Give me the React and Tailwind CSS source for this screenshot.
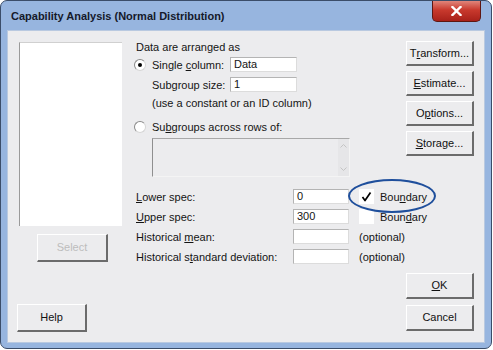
import React from 'react'

function U({ children }) {
  return <span className="underline underline-offset-[1px]">{children}</span>
}

function WinButton({ children, className = '', disabled = false }) {
  return (
    <button
      type="button"
      className={`flex shrink-0 items-center justify-center border-t border-l border-t-white border-l-white border-b-2 border-r-2 border-b-[#6b6b6b] border-r-[#6b6b6b] bg-[#ececee] text-[11px] leading-none ${
        disabled ? 'text-[#bdbdbd]' : 'text-[#111]'
      } ${className}`}
    >
      {children}
    </button>
  )
}

function Radio({ checked }) {
  return (
    <span className="flex h-[12px] w-[12px] shrink-0 items-center justify-center rounded-full border border-[#8a8a8a] border-b-[#d6d6d6] border-r-[#d6d6d6] bg-white">
      {checked && <span className="h-[4px] w-[4px] rounded-full bg-black" />}
    </span>
  )
}

function Field({ value = '', className = '' }) {
  return (
    <div
      className={`flex h-[15px] shrink-0 items-center border border-[#dcdcdc] border-t-[#b4b4b4] border-l-[#b4b4b4] bg-white pl-[3px] text-[11px] leading-none ${className}`}
    >
      {value}
    </div>
  )
}

export default function App() {
  return (
    <div className="h-[350px] w-[493px] bg-white font-['Liberation_Sans',Arial,sans-serif] text-[11px] text-[#141414]">
      <div className="flex h-[349px] w-[492px] flex-col rounded-[7px] border border-[#3b4d69] bg-[#97b5df]">
        {/* title bar */}
        <div className="flex h-[29px] items-start justify-between">
          <div className="pl-[10px] pt-[9px] text-[11px] font-bold leading-[13px] text-[#15192a]">
            Capability Analysis (Normal Distribution)
          </div>
          <div className="mr-[10px] flex h-[21px] w-[49px] items-center justify-center rounded-b-[5px] border border-t-0 border-[#5e1712] bg-[linear-gradient(180deg,#e0857a_0%,#c8392d_45%,#a8211a_100%)]">
            <svg width="11" height="10" viewBox="0 0 11 10">
              <path d="M1.5 1 L9.5 9 M9.5 1 L1.5 9" stroke="white" strokeWidth="2.4" strokeLinecap="square" />
            </svg>
          </div>
        </div>

        {/* client area */}
        <div className="mx-[6px] mb-[5px] flex flex-1 border border-[#b9c9e0] bg-[#ececee]">
          {/* left column */}
          <div className="flex w-[115px] shrink-0 flex-col pl-[9px] pt-[11px]">
            <div className="ml-[2px] h-[184px] w-[103px] border-l border-t border-l-[#9a9a9a] border-t-[#d0d0d0] bg-white" />
            <WinButton disabled className="ml-[20px] mt-[8px] h-[28px] w-[71px]">
              Select
            </WinButton>
            <WinButton className="mt-[42px] h-[28px] w-[70px]">Help</WinButton>
          </div>

          {/* middle column */}
          <div className="ml-[13px] flex w-[270px] shrink-0 flex-col pt-[9px] leading-[14px]">
            <div className="h-[14px]">Data are arranged as</div>

            <div className="mt-[3px] flex h-[15px] items-center">
              <div className="-ml-[2px]">
                <Radio checked />
              </div>
              <span className="ml-[6px] w-[78px] shrink-0">
                Single <U>c</U>olumn:
              </span>
              <Field value="Data" className="w-[67px]" />
            </div>

            <div className="mt-[5px] flex h-[15px] items-center pl-[16px]">
              <span className="w-[78px] shrink-0">Subgroup size:</span>
              <Field value="1" className="w-[67px]" />
            </div>

            <div className="mt-[4px] h-[14px] pl-[16px]">(use a constant or an ID column)</div>

            <div className="mt-[10px] flex h-[14px] items-center">
              <div className="-ml-[2px]">
                <Radio />
              </div>
              <span className="ml-[6px]">
                Su<U>b</U>groups across rows of:
              </span>
            </div>

            <div className="ml-[16px] mt-[4px] flex h-[39px] w-[198px] justify-end border-l border-t border-b border-r border-l-[#8f8f8f] border-t-[#a8a8a8] border-b-[#f4f4f4] border-r-[#f4f4f4]">
              <div className="flex w-[11px] flex-col items-center justify-between bg-[#e6e6e8] py-[5px]">
                <svg width="7" height="4" viewBox="0 0 7 4">
                  <path d="M0.5 3.5 L3.5 0.5 L6.5 3.5" fill="none" stroke="#c4c4c4" strokeWidth="1" />
                </svg>
                <svg width="7" height="4" viewBox="0 0 7 4">
                  <path d="M0.5 0.5 L3.5 3.5 L6.5 0.5" fill="none" stroke="#c4c4c4" strokeWidth="1" />
                </svg>
              </div>
            </div>

            <div className="relative mt-[12px] flex h-[15px] items-center whitespace-nowrap">
              <span className="w-[157px] shrink-0">
                <U>L</U>ower spec:
              </span>
              <Field value="0" className="w-[56px]" />
              <div className="ml-[10px] flex h-[15px] w-[15px] shrink-0 items-center justify-center bg-white">
                <svg width="11" height="11" viewBox="0 0 11 11">
                  <path d="M1.5 6 L4 9.5 L9.5 1.5" fill="none" stroke="#000" strokeWidth="1.7" strokeLinejoin="round" />
                </svg>
              </div>
              <span className="ml-[6px] shrink-0">
                Bou<U>n</U>dary
              </span>
              <div className="pointer-events-none absolute left-[212px] top-[-10px] h-[34px] w-[88px] rounded-[50%] border-[2.5px] border-[#1f4f9c]" />
            </div>

            <div className="mt-[5px] flex h-[15px] items-center whitespace-nowrap">
              <span className="w-[157px] shrink-0">
                <U>U</U>pper spec:
              </span>
              <Field value="300" className="w-[56px]" />
              <div className="ml-[10px] h-[15px] w-[15px] shrink-0 bg-white" />
              <span className="ml-[6px] shrink-0">
                Boun<U>d</U>ary
              </span>
            </div>

            <div className="mt-[5px] flex h-[15px] items-center whitespace-nowrap">
              <span className="w-[157px] shrink-0">
                Historical <U>m</U>ean:
              </span>
              <Field className="w-[56px]" />
              <span className="ml-[10px] shrink-0">(optional)</span>
            </div>

            <div className="mt-[5px] flex h-[15px] items-center whitespace-nowrap">
              <span className="w-[157px] shrink-0">
                Historical s<U>t</U>andard deviation:
              </span>
              <Field className="w-[56px]" />
              <span className="ml-[10px] shrink-0">(optional)</span>
            </div>
          </div>

          {/* right column */}
          <div className="flex w-[68px] shrink-0 flex-col pt-[10px]">
            <WinButton className="h-[25px] w-[68px]">
              T<U>r</U>ansform...
            </WinButton>
            <WinButton className="mt-[5px] h-[25px] w-[68px]">
              <U>E</U>stimate...
            </WinButton>
            <WinButton className="mt-[5px] h-[25px] w-[68px]">
              O<U>p</U>tions...
            </WinButton>
            <WinButton className="mt-[5px] h-[25px] w-[68px]">
              <U>S</U>torage...
            </WinButton>
            <WinButton className="mt-[117px] h-[26px] w-[68px]">
              <U>O</U>K
            </WinButton>
            <WinButton className="mt-[6px] h-[26px] w-[68px]">Cancel</WinButton>
          </div>
        </div>
      </div>
    </div>
  )
}
